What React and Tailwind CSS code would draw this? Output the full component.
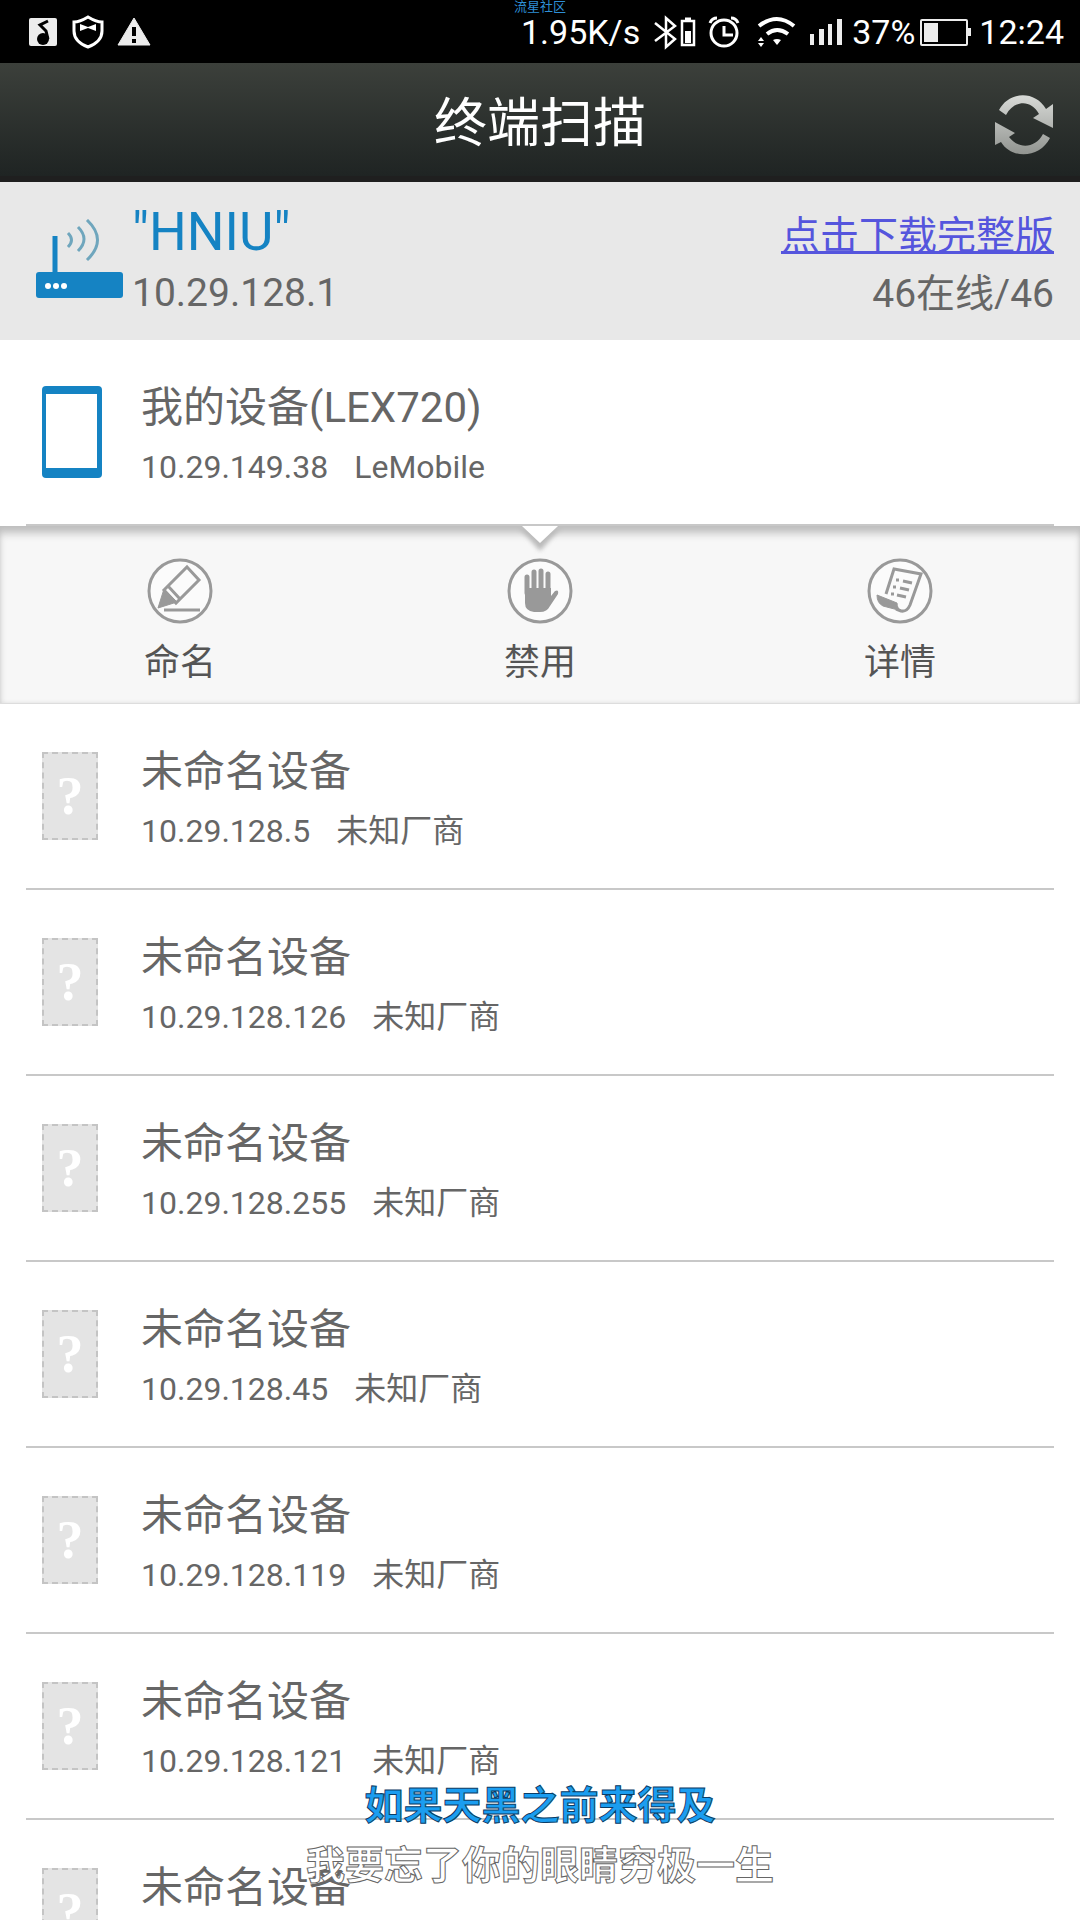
// src/App.jsx
import React from "react";

const devices = [
  { id: 1, name: "未命名设备", ip: "10.29.128.5", vendor: "未知厂商" },
  { id: 2, name: "未命名设备", ip: "10.29.128.126", vendor: "未知厂商" },
  { id: 3, name: "未命名设备", ip: "10.29.128.255", vendor: "未知厂商" },
  { id: 4, name: "未命名设备", ip: "10.29.128.45", vendor: "未知厂商" },
  { id: 5, name: "未命名设备", ip: "10.29.128.119", vendor: "未知厂商" },
  { id: 6, name: "未命名设备", ip: "10.29.128.121", vendor: "未知厂商" },
  { id: 7, name: "未命名设备", ip: "", vendor: "" },
];

const StatusBar = () => (
  <div className="relative flex h-[63px] shrink-0 items-center justify-between bg-black pl-7 pr-4 text-white">
    <div className="flex items-center gap-3">
      <svg className="h-8 w-8" viewBox="0 0 32 32" aria-hidden="true">
        <rect x="1" y="2" width="28" height="28" rx="2" fill="#ececec" />
        <circle cx="15" cy="23" r="6" fill="#000" />
        <path d="M20 5 L12 9 L18 15 L20 23" fill="none" stroke="#000" strokeWidth="3" />
      </svg>
      <svg className="h-9 w-8" viewBox="0 0 32 36" aria-hidden="true">
        <path d="M16 3 C11 6 7 8 2 8 V17 C2 25 8 30 16 33 C24 30 30 25 30 17 V8 C25 8 21 6 16 3 Z" fill="none" stroke="#fff" strokeWidth="3" />
        <path d="M8 10 L16 13 L24 10 V17 L16 14 L8 17 Z" fill="#fff" />
      </svg>
      <svg className="h-8 w-9" viewBox="0 0 36 32" aria-hidden="true">
        <path d="M18 2 L34 29 H2 Z" fill="#ececec" stroke="#ececec" strokeWidth="1" strokeLinejoin="round" />
        <path d="M16 11 h4 v9 h-4 Z M16 23 h4 v4 h-4 Z" fill="#000" />
      </svg>
    </div>

    <span className="absolute left-1/2 top-0 -translate-x-1/2 text-[13px] leading-[13px] text-[#2e8fd6]">
      流星社区
    </span>

    <div className="flex items-center text-[34px] leading-[40px]">
      <span>1.95K/s</span>
      <svg className="ml-3 h-9 w-11" viewBox="0 0 44 36" fill="none" stroke="#fff" strokeWidth="2.500" aria-hidden="true">
        <path d="M3 9 L23 25 L14 33 V4 L23 12 L3 27" />
        <rect x="30" y="7" width="12" height="24" />
        <path d="M33 5 H39" strokeWidth="3" />
        <rect x="33" y="17" width="6" height="12" fill="#fff" stroke="none" />
      </svg>
      <svg className="ml-3 h-9 w-8" viewBox="0 0 32 36" fill="none" stroke="#fff" strokeWidth="3" aria-hidden="true">
        <circle cx="16" cy="19" r="13" />
        <path d="M16 12 V21 H25" strokeWidth="3" />
        <path d="M2 9 Q4 4 9 4 M30 9 Q28 4 23 4" strokeWidth="3" />
      </svg>
      <svg className="ml-4 h-9 w-10" viewBox="0 0 40 36" fill="none" stroke="#fff" aria-hidden="true">
        <path d="M3 12 Q21 -2 38 12" strokeWidth="4" />
        <path d="M11 20 Q21 12 32 20" strokeWidth="4" />
        <path d="M17 26 Q21 24 25 26 L21 31 Z" fill="#fff" stroke="none" />
        <path d="M2 27 L5 23 L8 27 Z M2 29 L5 33 L8 29 Z" fill="#fff" stroke="none" />
      </svg>
      <svg className="ml-3 h-9 w-9" viewBox="0 0 36 36" fill="#ececec" aria-hidden="true">
        <path d="M2 20 h4 v11 h-4 Z M11 15 h5 v16 h-5 Z M20 10 h4 v21 h-4 Z M29 5 h5 v26 h-5 Z" />
      </svg>
      <span className="ml-2">37%</span>
      <svg className="ml-1 h-9 w-13" viewBox="0 0 52 36" aria-hidden="true">
        <rect x="2" y="6" width="46" height="25" rx="1" fill="none" stroke="#ececec" strokeWidth="2" />
        <rect x="5" y="9" width="14" height="19" fill="#ececec" />
        <path d="M49 14 h3 v8 h-3 Z" fill="#ececec" />
      </svg>
      <span className="ml-2">12:24</span>
    </div>
  </div>
);

const Header = () => (
  <header className="grid h-[119px] shrink-0 grid-cols-[1fr_auto_1fr] items-center border-b-6 border-[#1f1f1f] bg-linear-to-b from-[#3c403b] to-[#1f2423] px-6 pt-2">
    <h1 className="col-start-2 text-[53px] leading-[60px] text-white">终端扫描</h1>
    <button type="button" aria-label="刷新" className="justify-self-end">
      <svg className="h-16 w-16" viewBox="0 0 64 64" aria-hidden="true">
        <defs>
          <linearGradient id="metal" x1="0" y1="0" x2="0" y2="64" gradientUnits="userSpaceOnUse">
            <stop offset="0" stopColor="#dcdedb" />
            <stop offset="1" stopColor="#8f928e" />
          </linearGradient>
        </defs>
        <path d="M7 18 C17 -1 43 -2 54 17 L61 12 V36 L41 26 L47 22 C39 7 22 8 14 23 Z" fill="url(#metal)" />
        <path d="M58 46 C48 66 20 68 9 50 L3 53 V30 L23 41 L17 45 C26 57 43 57 51 42 Z" fill="url(#metal)" />
      </svg>
    </button>
  </header>
);

const NetworkInfo = () => (
  <section className="flex h-[158px] shrink-0 items-center justify-between bg-[#e8e8e8] pl-9 pr-[26px] text-[39px] leading-[46px] text-[#666]">
    <div className="flex items-center gap-2">
      <svg className="mb-1 h-20 w-[88px]" viewBox="0 0 88 80" aria-hidden="true">
        <rect x="0" y="53" width="87" height="26" rx="3" fill="#1583c3" />
        <path d="M19 17 V54" stroke="#1583c3" strokeWidth="5" />
        <g fill="#fff">
          <circle cx="12" cy="67" r="3" />
          <circle cx="20" cy="67" r="3" />
          <circle cx="28" cy="67" r="3" />
        </g>
        <path d="M32 14 Q39 21 32 28 M42 8 Q54 20 42 32 M51 1 Q72 21 51 41" fill="none" stroke="#6fa6bd" strokeWidth="3" />
      </svg>
      <div className="flex flex-col gap-2 pb-1">
        <h2 className="text-[53px] leading-[60px] text-[#1583c3]">"HNIU"</h2>
        <p>10.29.128.1</p>
      </div>
    </div>
    <div className="flex flex-col gap-3 pt-2 text-right">
      <a href="#download" className="text-[#5555dd] underline underline-offset-2">
        点击下载完整版
      </a>
      <p>46在线/46</p>
    </div>
  </section>
);

const PhoneIcon = () => (
  <svg className="ml-4 h-24 w-15" viewBox="0 0 60 96" aria-hidden="true">
    <rect x="0" y="2" width="60" height="92" rx="4" fill="#1583c3" />
    <rect x="4" y="10" width="51" height="74" fill="#fff" />
  </svg>
);

const UnknownIcon = () => (
  <span className="ml-4 flex h-22 w-14 items-center justify-center border-2 border-dashed border-[#c4c4c4] bg-[#e4e4e4] font-['Liberation_Serif',serif] text-[54px] font-bold leading-[54px] text-white">
    ?
  </span>
);

const DeviceRow = ({ name, ip, vendor, icon }) => (
  <li className="mx-[26px] flex h-[186px] shrink-0 items-center border-b-2 border-[#c8c8c8]">
    <div className="w-[115px] shrink-0">{icon}</div>
    <div className="pt-2 text-[#666]">
      <h3 className="text-[42px] leading-[54px]">{name}</h3>
      <p className="mt-2 flex h-12 gap-[26px] text-[32px] leading-[48px]">
        <span>{ip}</span>
        <span>{vendor}</span>
      </p>
    </div>
  </li>
);

const ActionButton = ({ label, children }) => (
  <button type="button" className="flex flex-1 flex-col items-center gap-[14px] text-[36px] leading-[48px] text-[#555]">
    <svg className="h-[68px] w-[68px]" viewBox="0 0 68 68" fill="none" stroke="#999" strokeWidth="3" aria-hidden="true">
      <circle cx="34" cy="34" r="31" fill="#fbfbfb" />
      {children}
    </svg>
    {label}
  </button>
);

const ActionPanel = () => (
  <div className="relative flex h-[178px] shrink-0 items-start border-b border-[#ddd] bg-[#f7f7f7] pt-[31px] shadow-[inset_0_9px_8px_-2px_#bdbdbd,inset_0_0_4px_#ddd]">
    <svg className="absolute left-1/2 top-0 h-7 w-12 -translate-x-1/2" viewBox="0 0 48 28" aria-hidden="true">
      <path d="M3 2 L24 25 L45 2 Z" fill="#bbb" className="blur-[2px]" />
      <path d="M6 0 H42 L24 17 Z" fill="#fff" />
    </svg>
    <ActionButton label="命名">
      <path d="M41 10 L53 23 L30 46 L18 33 Z M22 29 L34 42" />
      <path d="M18 32 L31 45 L12 51 Z" fill="#999" strokeWidth="1" />
      <path d="M18 53 H54" />
    </ActionButton>
    <ActionButton label="禁用">
      <path d="M21 20 V36 M28 15 V34 M35 14 V34 M42 17 V36" strokeWidth="5" strokeLinecap="round" />
      <path d="M19 31 H45 V39 L49 34 Q53 32 52 37 L44 49 Q41 55 34 55 H28 Q19 54 19 46 Z" fill="#999" stroke="none" />
    </ActionButton>
    <ActionButton label="详情">
      <path d="M20 37 L28 12 L55 17 L44 48 Q41 55 35 54 L30 52" />
      <path d="M11 38 L31 46 Q31 52 36 54 L17 49 Q11 46 11 38 Z" fill="#999" strokeWidth="1" />
      <path d="M30 23 h3 M37 24 l9 2 M27 30 h3 M34 31 l9 2 M25 37 h3 M31 38 l9 2" />
    </ActionButton>
  </div>
);

// floating desktop lyrics, drawn over the app
const Lyrics = () => (
  <div className="pointer-events-none absolute inset-x-0 bottom-6 flex flex-col items-center text-[39px] font-bold leading-[60px]">
    <p className="text-[#1b9df0] [-webkit-text-stroke:1px_#0b3d66]">如果天黑之前来得及</p>
    <p className="text-white [-webkit-text-stroke:1px_#666]">我要忘了你的眼睛穷极一生</p>
  </div>
);

const App = () => {
  return (
    <div className="relative flex h-screen flex-col overflow-hidden bg-white font-['Roboto','Noto_Sans_CJK_SC',sans-serif]">
      <StatusBar />
      <Header />
      <NetworkInfo />
      <main className="min-h-0 flex-1 overflow-hidden">
        <ul>
          <DeviceRow name="我的设备(LEX720)" ip="10.29.149.38" vendor="LeMobile" icon={<PhoneIcon />} />
        </ul>
        <ActionPanel />
        <ul>
          {devices.map((device) => (
            <DeviceRow key={device.id} {...device} icon={<UnknownIcon />} />
          ))}
        </ul>
      </main>
      <Lyrics />
    </div>
  );
};

export default App;
